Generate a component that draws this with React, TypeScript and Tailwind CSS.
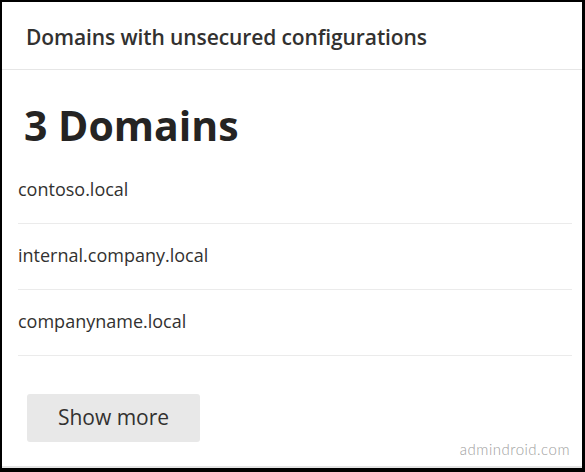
import React from "react";

const domains = ["contoso.local", "internal.company.local", "companyname.local"];

export default function App() {
  return (
    <div className="w-[585px] h-[472px] bg-black pl-[2px] pt-[2px] pr-[3px] pb-[4px]">
      <div
        className="relative h-full bg-white flex flex-col border-b-2 border-[#e3e3e3] text-[#323130]"
        style={{ fontFamily: '"Open Sans", "Noto Sans", Arial, sans-serif' }}
      >
        <div className="h-[68px] shrink-0 border-b border-[#e6e6e6] flex items-center pl-[24px] pt-[2px]">
          <span className="text-[21px] font-semibold leading-[28px] tracking-[-0.1px]">Domains with unsecured configurations</span>
        </div>
        <div className="pl-[16px] pr-[10px] flex flex-col">
          <div className="h-[88px] pt-[35px] pl-[6px] text-[41px] font-bold leading-none text-[#252423]">3 Domains</div>
          {domains.map((d) => (
            <div key={d} className="h-[66px] border-b border-[#ebebeb] flex items-center pb-[4px]">
              <span className="text-[18px] leading-[26px]">{d}</span>
            </div>
          ))}
          <button className="mt-[38px] ml-[9px] w-[173px] h-[48px] bg-[#e8e8e8] rounded-[3px] flex items-center justify-center text-[21px] font-medium text-[#323130]">
            Show more
          </button>
        </div>
        <div
          className="absolute right-[12px] bottom-[6px] text-[15px] font-light text-[#a0a0a0] tracking-[0.5px]"
          style={{ fontFamily: 'Lato, "Open Sans", sans-serif' }}
        >
          admindroid.com
        </div>
      </div>
    </div>
  );
}
